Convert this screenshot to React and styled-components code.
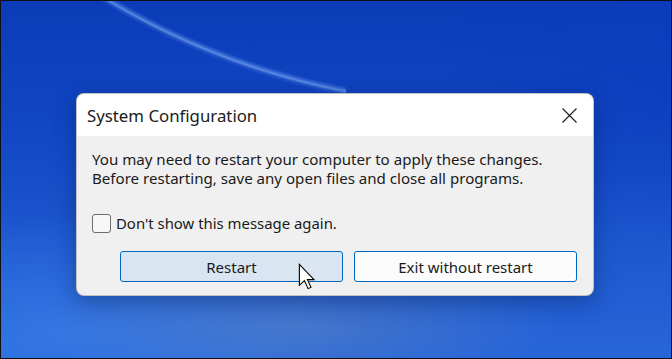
import React, { useState } from 'react'
import styled, { createGlobalStyle } from 'styled-components'

const GlobalStyle = createGlobalStyle`
  html, body {
    margin: 0;
    padding: 0;
  }
  body {
    font-family: "Noto Sans", "Liberation Sans", sans-serif;
    color: #1a1a1a;
  }
`

const Desktop = styled.div`
  width: 672px;
  height: 359px;
  box-sizing: border-box;
  border: 1px solid #111;
  overflow: hidden;
  padding: 92px 0 0 75px;
  background:
    radial-gradient(circle 739px at 486px -635px, transparent 734px, rgba(120, 170, 255, 0.35) 737px, rgba(160, 200, 255, 0.55) 739px, rgba(120, 170, 255, 0.2) 741px, transparent 744px) 0 0 / 345px 100px no-repeat,
    radial-gradient(ellipse 260px 60px at 300px 325px, rgba(110, 140, 190, 0.45), transparent 100%),
    radial-gradient(ellipse 300px 120px at 60px 330px, rgba(60, 130, 235, 0.6), transparent 100%),
    radial-gradient(ellipse 240px 200px at 680px 40px, rgba(10, 60, 190, 0.7), transparent 100%),
    linear-gradient(180deg, #0b3cb8 0%, #1146c4 35%, #1d58d0 70%, #2766d8 100%);
`

const Dialog = styled.div`
  width: 518px;
  height: 203px;
  box-sizing: border-box;
  border-radius: 8px;
  background: #f0f0f0;
  border: 1px solid rgba(0, 0, 0, 0.2);
  box-shadow: 0 6px 22px rgba(0, 20, 60, 0.35);
  overflow: hidden;
  display: flex;
  flex-direction: column;
`

const TitleBar = styled.div`
  height: 42px;
  background: #fff;
  display: flex;
  align-items: center;
  justify-content: space-between;
  padding: 0 16px 0 10px;
`

const Title = styled.span`
  font-size: 16.8px;
`

const CloseButton = styled.button`
  border: none;
  background: none;
  padding: 0;
  width: 15px;
  height: 15px;
  display: flex;
  cursor: default;
`

const Body = styled.div`
  flex: 1;
  display: flex;
  flex-direction: column;
  padding: 14px 16px 13px 15px;
`

const Message = styled.p`
  margin: 0;
  font-size: 15.1px;
  line-height: 19px;
`

const CheckRow = styled.label`
  display: flex;
  align-items: center;
  gap: 5px;
  margin-top: 25px;
  font-size: 14.9px;
  line-height: 20px;
`

const Box = styled.span`
  width: 17px;
  height: 17px;
  border: 1px solid #6b6b6b;
  border-radius: 3px;
  background: ${p => (p.$checked ? '#0067c0' : '#f7f7f7')};
`

const Buttons = styled.div`
  display: flex;
  justify-content: flex-end;
  gap: 11px;
  margin-top: auto;
`

const Button = styled.button`
  position: relative;
  width: 223px;
  height: 31px;
  box-sizing: border-box;
  border: 1px solid #0067c0;
  border-radius: 3px;
  background: ${p => (p.$hover ? '#d9e5f0' : '#fcfcfc')};
  font-family: inherit;
  font-size: 15px;
  color: #1a1a1a;
  padding: 0;
`

const Pointer = styled.svg`
  position: absolute;
  left: 177px;
  top: 11px;
`

function Cursor() {
  return (
    <Pointer width="18" height="27" viewBox="0 0 13 20" preserveAspectRatio="none">
      <path
        d="M1 1 L1 16.5 L4.6 13 L7.3 19 L9.4 18 L6.8 12.3 L11.6 12.3 Z"
        fill="#fff"
        stroke="#000"
        strokeWidth="0.8"
        strokeLinejoin="miter"
      />
    </Pointer>
  )
}

export default function App() {
  const [dontShow, setDontShow] = useState(false)

  return (
    <>
      <GlobalStyle />
      <Desktop>
        <Dialog>
          <TitleBar>
            <Title>System Configuration</Title>
            <CloseButton aria-label="Close">
              <svg width="15" height="15" viewBox="0 0 15 15">
                <path d="M0.5 0.5 L14.5 14.5 M14.5 0.5 L0.5 14.5" stroke="#1a1a1a" strokeWidth="1.1" />
              </svg>
            </CloseButton>
          </TitleBar>
          <Body>
            <Message>
              You may need to restart your computer to apply these changes.
              <br />
              Before restarting, save any open files and close all programs.
            </Message>
            <CheckRow onClick={() => setDontShow(!dontShow)}>
              <Box $checked={dontShow} />
              Don't show this message again.
            </CheckRow>
            <Buttons>
              <Button $hover>
                Restart
                <Cursor />
              </Button>
              <Button>Exit without restart</Button>
            </Buttons>
          </Body>
        </Dialog>
      </Desktop>
    </>
  )
}
